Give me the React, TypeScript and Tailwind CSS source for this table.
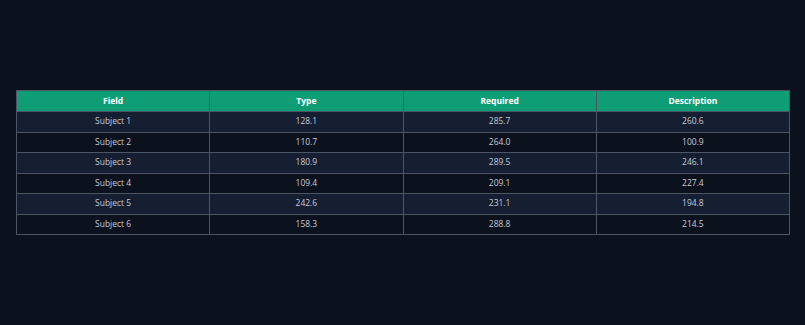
import React from 'react';

const rows = [
  ['Subject 1', '128.1', '285.7', '260.6'],
  ['Subject 2', '110.7', '264.0', '100.9'],
  ['Subject 3', '180.9', '289.5', '246.1'],
  ['Subject 4', '109.4', '209.1', '227.4'],
  ['Subject 5', '242.6', '231.1', '194.8'],
  ['Subject 6', '158.3', '288.8', '214.5'],
];

export default function App() {
  return (
    <div className="w-[805px] h-[325px] bg-[#0c111e] pt-[90px] px-[16px]" style={{ fontFamily: '"Open Sans", "Noto Sans", sans-serif' }}>
      <table className="w-[774px] border-collapse table-fixed text-[8.5px]">
        <thead>
          <tr className="h-[21px] bg-[#0f9d76]">
            {['Field', 'Type', 'Required', 'Description'].map((h) => (
              <th key={h} className="border border-[#4b5563] text-white font-bold text-center p-0">{h}</th>
            ))}
          </tr>
        </thead>
        <tbody>
          {rows.map((r, i) => (
            <tr key={i} className={`h-[20.5px] ${i % 2 === 0 ? 'bg-[#161f32]' : 'bg-[#0c111e]'}`}>
              {r.map((c, j) => (
                <td key={j} className="border border-[#4b5563] text-[#c4cbd6] text-center p-0">{c}</td>
              ))}
            </tr>
          ))}
        </tbody>
      </table>
    </div>
  );
}
